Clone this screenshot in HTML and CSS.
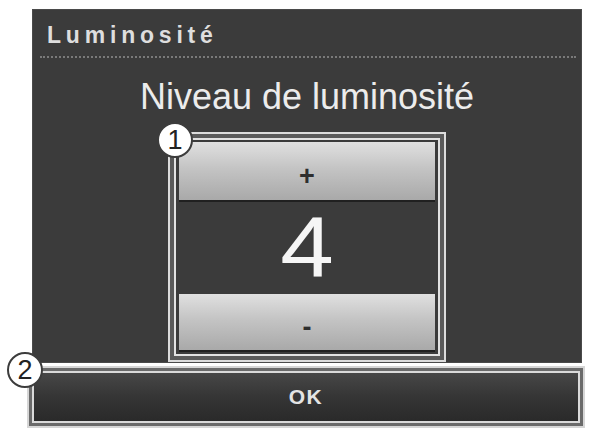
FILE: index.html
```html
<!DOCTYPE html>
<html lang="fr">
<head>
<meta charset="utf-8">
<title>Luminosité</title>
<link rel="stylesheet" href="styles.css">
</head>
<body>
<div class="screen">
  <div class="panel">
    <div class="header"><span class="header-text">Luminosité</span></div>
    <div class="title">Niveau de luminosité</div>
    <div class="frame">
      <div class="frame-inner">
        <div class="btn btn-plus">+</div>
        <div class="value">4</div>
        <div class="btn btn-minus">-</div>
      </div>
    </div>
  </div>
  <div class="okframe">
    <div class="okframe-inner">
      <div class="okbar">OK</div>
    </div>
  </div>
  <div class="badge badge-1">1</div>
  <div class="badge badge-2">2</div>
</div>
</body>
</html>
```

FILE: styles.css
```css
html, body {
  margin: 0;
  padding: 0;
  background: #ffffff;
}

.screen {
  position: relative;
  width: 590px;
  height: 432px;
  padding-top: 9px;
  box-sizing: border-box;
  font-family: "Liberation Sans", Arial, sans-serif;
}

.panel {
  margin-left: 32px;
  width: 550px;
  height: 354px;
  background: #3b3b3b;
  display: flex;
  flex-direction: column;
  box-shadow: inset 0 0 0 1px #4a4a4a;
}

.header {
  height: 47px;
  margin: 0 6px 0 8px;
  border-bottom: 2px dotted #7a7a7a;
  display: flex;
  align-items: flex-end;
  padding-left: 7px;
}

.header-text {
  color: #dedede;
  font-size: 23px;
  font-weight: bold;
  letter-spacing: 4.8px;
  line-height: 26px;
  margin-bottom: 8px;
}

.title {
  margin-top: 19px;
  text-align: center;
  color: #ececec;
  font-size: 36px;
  line-height: 40px;
  height: 40px;
}

.frame {
  margin: 15px auto 0;
  width: 278px;
  height: 230px;
  box-sizing: border-box;
  border: 2px solid #dcdcdc;
  padding: 4px;
  background: #5a5a5a;
}

.frame-inner {
  height: 100%;
  box-sizing: border-box;
  border: 2px solid #e2e2e2;
  padding: 2px 3px;
  background: #3b3b3b;
  display: flex;
  flex-direction: column;
}

.btn {
  display: flex;
  align-items: center;
  justify-content: center;
  color: #2e2e2e;
  font-size: 27px;
  font-weight: bold;
  background: linear-gradient(#e0e0e0, #c4c4c4 45%, #a9a9a9);
  border-bottom: 2px solid #202020;
  box-sizing: border-box;
}

.btn-plus {
  height: 60px;
  padding-top: 10px;
}

.btn-minus {
  height: 58px;
  padding-top: 10px;
}

.value {
  flex: 1;
  display: flex;
  align-items: center;
  justify-content: center;
  color: #f6f6f6;
  font-size: 86px;
  line-height: 86px;
  padding-bottom: 4px;
  transform: scaleX(1.12);
}

.okframe {
  margin: 3px 0 0 27px;
  width: 558px;
  height: 62px;
  box-sizing: border-box;
  border: 2px solid #d6d6d6;
  padding: 3px;
  background: #6a6a6a;
}

.okframe-inner {
  height: 100%;
  box-sizing: border-box;
  border: 2px solid #dadada;
}

.okbar {
  height: 100%;
  display: flex;
  align-items: center;
  justify-content: center;
  color: #e4e4e4;
  font-size: 21px;
  font-weight: bold;
  letter-spacing: 1.5px;
  background: linear-gradient(#474747, #353535 50%, #2a2a2a);
}

.badge {
  position: absolute;
  width: 36px;
  height: 36px;
  box-sizing: border-box;
  border-radius: 50%;
  border: 2px solid #3c3c3c;
  background: #ffffff;
  color: #222;
  font-size: 27px;
  line-height: 32px;
  text-align: center;
}

.badge-1 {
  left: 157px;
  top: 122px;
}

.badge-2 {
  left: 7px;
  top: 352px;
}
```
